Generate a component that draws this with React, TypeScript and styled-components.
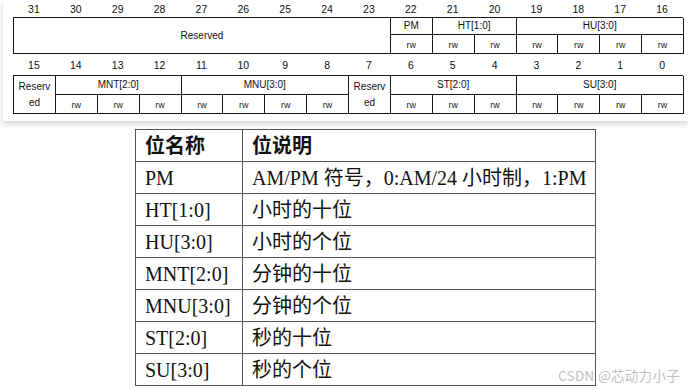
import styled, { createGlobalStyle } from 'styled-components';

const GlobalStyle = createGlobalStyle`
    html, body {
        margin: 0;
        padding: 0;
        background: #ffffff;
    }
    body {
        width: 688px;
        height: 390px;
        overflow: hidden;
        position: relative;
    }
`;

interface IField {
    label: string;
    col: number;
    span: number;
    rw?: boolean;
    tall?: boolean;
}

const upperFields: IField[] = [
    { label: 'Reserved', col: 1, span: 9, tall: true },
    { label: 'PM', col: 10, span: 1, rw: true },
    { label: 'HT[1:0]', col: 11, span: 2, rw: true },
    { label: 'HU[3:0]', col: 13, span: 4, rw: true },
];

const lowerFields: IField[] = [
    { label: 'Reserv ed', col: 1, span: 1, tall: true },
    { label: 'MNT[2:0]', col: 2, span: 3, rw: true },
    { label: 'MNU[3:0]', col: 5, span: 4, rw: true },
    { label: 'Reserv ed', col: 9, span: 1, tall: true },
    { label: 'ST[2:0]', col: 10, span: 3, rw: true },
    { label: 'SU[3:0]', col: 13, span: 4, rw: true },
];

const rows = [
    { name: 'PM', desc: 'AM/PM 符号，0:AM/24 小时制，1:PM' },
    { name: 'HT[1:0]', desc: '小时的十位' },
    { name: 'HU[3:0]', desc: '小时的个位' },
    { name: 'MNT[2:0]', desc: '分钟的十位' },
    { name: 'MNU[3:0]', desc: '分钟的个位' },
    { name: 'ST[2:0]', desc: '秒的十位' },
    { name: 'SU[3:0]', desc: '秒的个位' },
];

const RegisterBlock = ({
    first,
    fields,
    topHeight,
}: {
    first: number;
    fields: IField[];
    topHeight: number;
}) => {
    const bits = Array.from({ length: 16 }, (_, i) => first - i);
    const rwCells: number[] = [];
    fields.forEach((f) => {
        if (f.rw) {
            for (let c = f.col; c < f.col + f.span; c++) rwCells.push(c);
        }
    });

    return (
        <>
            <BitRow>
                {bits.map((b) => (
                    <BitNum key={b}>{b}</BitNum>
                ))}
            </BitRow>
            <FieldGrid $top={topHeight}>
                {fields.map((f) => (
                    <FieldCell
                        key={f.col}
                        $col={f.col}
                        $span={f.span}
                        $tall={!!f.tall}
                        $narrow={f.span === 1 && !!f.tall}
                    >
                        {f.label}
                    </FieldCell>
                ))}
                {rwCells.map((c) => (
                    <RwCell key={c} $col={c}>
                        rw
                    </RwCell>
                ))}
            </FieldGrid>
        </>
    );
};

const App = () => {
    return (
        <>
            <GlobalStyle />
            <Card>
                <RegisterBlock first={31} fields={upperFields} topHeight={17} />
                <RegisterBlock first={15} fields={lowerFields} topHeight={19} />
            </Card>
            <BitTable>
                <tbody>
                    <tr>
                        <HeadCell>位名称</HeadCell>
                        <HeadCell>位说明</HeadCell>
                    </tr>
                    {rows.map((r) => (
                        <tr key={r.name}>
                            <NameCell>{r.name}</NameCell>
                            <DescCell>{r.desc}</DescCell>
                        </tr>
                    ))}
                </tbody>
            </BitTable>
            <Watermark>CSDN @芯动力小子</Watermark>
        </>
    );
};

export default App;

const Card = styled.div`
    margin-left: 3px;
    height: 121px;
    padding: 0 0 0 10px;
    background: #ffffff;
    box-shadow: 0 3px 6px rgba(0, 0, 0, 0.18);
    font-family: 'Liberation Sans', Arial, sans-serif;
    color: #111;
    box-sizing: border-box;
`;

const BitRow = styled.div`
    display: grid;
    grid-template-columns: repeat(16, 41.875px);
    height: 17px;
    align-items: center;
    &:nth-of-type(3) {
        height: 21px;
        padding-top: 0;
    }
`;

const BitNum = styled.div`
    text-align: center;
    font-size: 10.5px;
    line-height: 12px;
`;

const FieldGrid = styled.div<{ $top: number }>`
    display: grid;
    grid-template-columns: repeat(16, 41.875px);
    grid-template-rows: ${(p) => p.$top}px 19px;
    width: 670px;
    border: 1px solid #1a1a1a;
    box-sizing: border-box;
    border-right: none;
    border-bottom: none;
`;

const FieldCell = styled.div<{
    $col: number;
    $span: number;
    $tall: boolean;
    $narrow: boolean;
}>`
    grid-column: ${(p) => p.$col} / span ${(p) => p.$span};
    grid-row: ${(p) => (p.$tall ? '1 / span 2' : '1')};
    display: flex;
    align-items: center;
    justify-content: center;
    text-align: center;
    border-right: 1px solid #1a1a1a;
    border-bottom: 1px solid #1a1a1a;
    font-size: 10px;
    line-height: 16px;
    padding: 0 ${(p) => (p.$narrow ? '1px' : '0')};
    word-break: break-all;
    overflow: hidden;
`;

const RwCell = styled.div<{ $col: number }>`
    grid-column: ${(p) => p.$col};
    grid-row: 2;
    display: flex;
    align-items: center;
    justify-content: center;
    border-right: 1px solid #1a1a1a;
    border-bottom: 1px solid #1a1a1a;
    font-size: 9px;
    color: #222;
    padding-top: 1px;
`;

const BitTable = styled.table`
    margin: 8px 0 0 135px;
    width: 461px;
    border-collapse: collapse;
    font-family: 'Liberation Serif', 'Times New Roman', 'Noto Sans CJK SC', serif;
    font-size: 20px;
    color: #111;
`;

const Cell = styled.td`
    height: 31px;
    padding: 0 0 0 9px;
    border: 1px solid #555;
    white-space: nowrap;
    line-height: 22px;
`;

const HeadCell = styled(Cell)`
    font-weight: bold;
    &:first-child {
        width: 97px;
    }
`;

const NameCell = styled(Cell)`
    width: 97px;
`;

const DescCell = styled(Cell)`
    font-family: 'Liberation Serif', 'Noto Sans CJK SC', serif;
`;

const Watermark = styled.div`
    position: absolute;
    right: 8px;
    bottom: 5px;
    font-family: 'Noto Sans CJK SC', 'Liberation Sans', sans-serif;
    font-size: 13.5px;
    color: #c0c0c0;
    letter-spacing: 0.3px;
`;
